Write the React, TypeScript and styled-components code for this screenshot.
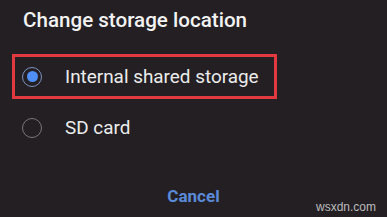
import React from 'react';
import styled, { createGlobalStyle } from 'styled-components';

const GlobalStyle = createGlobalStyle`
  html, body {
    margin: 0;
    padding: 0;
    background: #231f23;
  }
  body {
    font-family: Roboto, "Noto Sans", Arial, sans-serif;
  }
`;

const options = [
  { label: 'Internal shared storage', selected: true },
  { label: 'SD card', selected: false },
];

export default function App() {
  return (
    <>
      <GlobalStyle />
      <Dialog>
        <Title>Change storage location</Title>
        <OptionList>
          {options.map((o) => (
            <Option key={o.label} $selected={o.selected}>
              <Radio $checked={o.selected} />
              <OptionLabel>{o.label}</OptionLabel>
            </Option>
          ))}
        </OptionList>
        <Actions>
          <CancelButton>Cancel</CancelButton>
        </Actions>
        <Watermark>wsxdn.com</Watermark>
      </Dialog>
    </>
  );
}

const Dialog = styled.div`
  position: relative;
  width: 387px;
  height: 217px;
  background: #231f23;
  display: flex;
  flex-direction: column;
  overflow: hidden;
`;

const Title = styled.h1`
  margin: 0;
  padding: 8px 0 0 23px;
  font-size: 20.6px;
  line-height: 24px;
  font-weight: 500;
  color: #f2f2f2;
`;

const OptionList = styled.div`
  display: flex;
  flex-direction: column;
  gap: 6px;
  margin: 22px 0 0 12px;
`;

const Option = styled.div<{ $selected: boolean }>`
  box-sizing: border-box;
  width: 265px;
  height: 45px;
  display: flex;
  align-items: center;
  gap: 23px;
  padding-left: 7px;
  border: 3px solid ${(p) => (p.$selected ? '#e0393f' : 'transparent')};
`;

const Radio = styled.span<{ $checked: boolean }>`
  box-sizing: border-box;
  width: 20px;
  height: 20px;
  flex-shrink: 0;
  border-radius: 50%;
  border: 1.5px solid ${(p) => (p.$checked ? '#7d93c4' : '#7a777a')};
  display: flex;
  align-items: center;
  justify-content: center;

  &::after {
    content: '';
    width: 11px;
    height: 11px;
    border-radius: 50%;
    background: #4e8ef5;
    display: ${(p) => (p.$checked ? 'block' : 'none')};
  }
`;

const OptionLabel = styled.span`
  font-size: 18.9px;
  color: #ececec;
  white-space: nowrap;
`;

const Actions = styled.div`
  display: flex;
  justify-content: center;
  margin-top: 36px;
`;

const CancelButton = styled.button`
  background: none;
  border: none;
  padding: 0;
  font-family: Roboto, "Noto Sans", Arial, sans-serif;
  font-size: 17px;
  font-weight: 700;
  color: #5b8ad8;
`;

const Watermark = styled.span`
  position: absolute;
  right: 11px;
  bottom: 3px;
  font-family: "Liberation Sans", Arial, sans-serif;
  font-size: 12px;
  color: #bdbdbd;
`;
